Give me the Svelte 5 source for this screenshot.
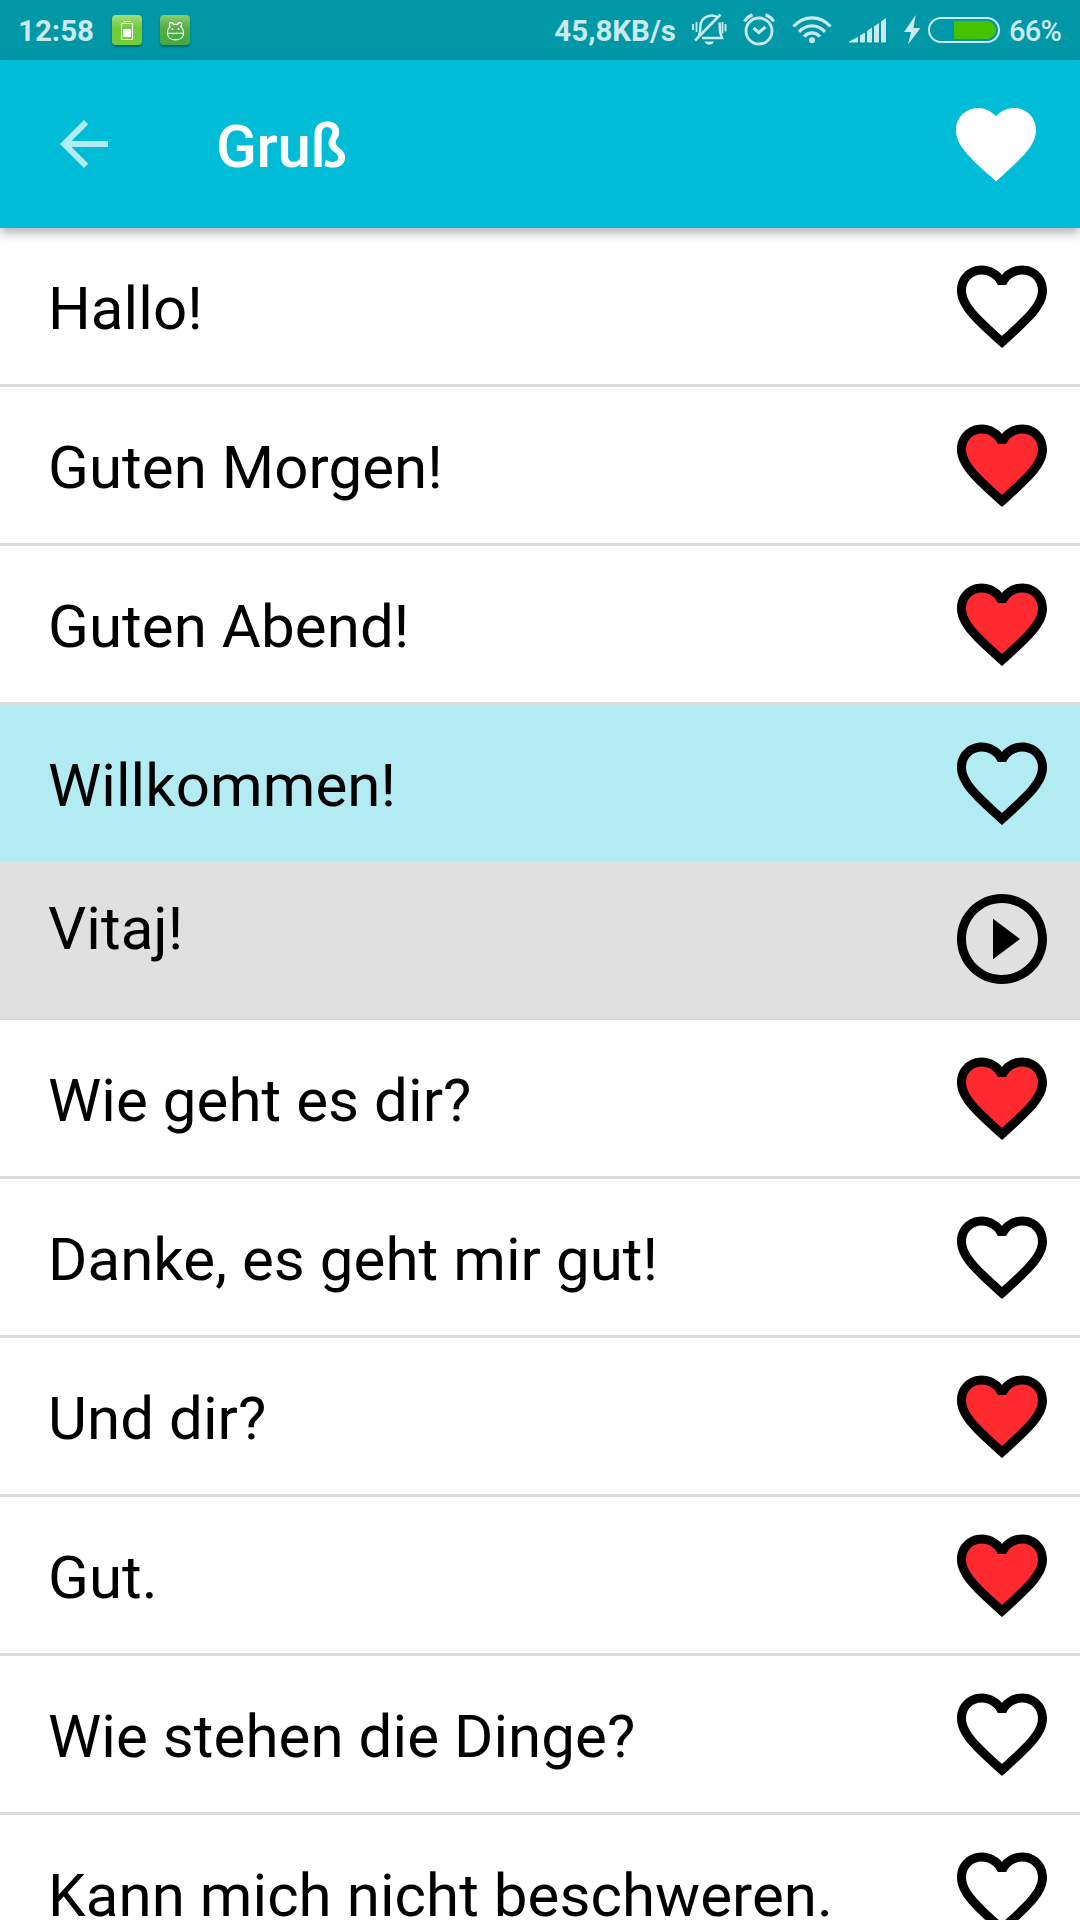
<script>
  let phrases = $state([
    { text: 'Hallo!', favorite: false },
    { text: 'Guten Morgen!', favorite: true },
    { text: 'Guten Abend!', favorite: true },
    { text: 'Willkommen!', favorite: false, translation: 'Vitaj!' },
    { text: 'Wie geht es dir?', favorite: true },
    { text: 'Danke, es geht mir gut!', favorite: false },
    { text: 'Und dir?', favorite: true },
    { text: 'Gut.', favorite: true },
    { text: 'Wie stehen die Dinge?', favorite: false },
    { text: 'Kann mich nicht beschweren.', favorite: false }
  ])

  // index of the phrase whose translation is shown
  let opened = $state(3)
</script>

<div class="screen">

  <!-- STATUS BAR -->
  <div class="status">
    <span class="status__time">12:58</span>
    <span class="app-badge">
      <svg width="30" height="30" viewBox="0 0 30 30" fill="none" stroke="#fff">
        <path d="M11.5 6.5h7" />
        <rect x="9.5" y="8.5" width="11" height="16" />
        <rect x="11" y="14" width="8" height="8" fill="#fff" stroke="none" />
      </svg>
    </span>
    <span class="app-badge app-badge--dark">
      <svg width="30" height="30" viewBox="0 0 30 30" fill="none" stroke="#fff" stroke-width="1.2">
        <path d="M7.5 18.4h16c0 4-3.4 6.5-8 6.5s-8-2.5-8-6.5z" />
        <path d="M7.5 18.4c0-3 .8-5.400 2.700-6.600-1.200-1.800-.8-3.700.6-4.100 1.200-.3 2.400.7 2.700 1.900 1.300-.4 2.700-.4 4 0 .3-1.200 1.500-2.200 2.700-1.900 1.400.4 1.800 2.300.6 4.100 1.900 1.200 2.700 3.600 2.700 6.600" />
        <path d="M12.5 13v2M18.500 13v2" stroke-width="1.6" />
      </svg>
    </span>

    <span class="status__speed">45,8KB/s</span>
    <svg class="status__bell" width="36" height="34" viewBox="0 0 36 34" fill="none" stroke="currentColor">
      <path d="M1 11v6M4.500 9v10M30.500 9v11.500M33.500 11v7.500" stroke-width="1.800" />
      <path d="M7 22.500c1-2 1.300-4.500 1.300-8 0-6.500 4-10.500 9.200-11.700 3.300-.6 6.500.2 8.500 2M27.500 9.500c.3 2.500.2 5.500.5 8 .3 2.600 1 4.800 2 7.500H10" stroke-width="2.500" />
      <path d="M3 27.500 28.500 1.500" stroke-width="2.600" />
      <path d="M12.500 28.600h9.500c-1 2.300-2.600 3.100-4.700 3.100s-3.800-.8-4.800-3.100z" fill="currentColor" stroke="none" />
    </svg>
    <svg class="status__alarm" width="34" height="34" viewBox="0 0 34 34" fill="none" stroke="currentColor">
      <circle cx="16" cy="18" r="13" stroke-width="2.800" />
      <path d="M1.500 8.500C3.500 5.300 6 3 9.500 1.700M22.500 1.700C26 3 28.800 5.300 30.800 8.500" stroke-width="3.200" />
      <path d="M10.500 15 15.800 19.500 22.500 14" stroke-width="3" />
    </svg>
    <svg class="status__wifi" width="40" height="28" viewBox="0 0 40 28" fill="none" stroke="currentColor" stroke-width="3.300">
      <path d="M1.500 10.500C12-1 28-1 38.500 10.500" />
      <path d="M7 15.800c7.500-8 18.500-8 26 0" />
      <path d="M12 20.600c4.700-5 11.300-5 16 0" />
      <circle cx="20" cy="24.300" r="3" fill="currentColor" stroke="none" />
    </svg>
    <svg class="status__signal" width="37" height="25" viewBox="0 0 37 25" fill="currentColor">
      <path d="M0 23.500 9 19v4.500q0 1-1 1H0z" />
      <path d="M11 17.500 16 14.500v9q0 1-1 1h-3q-1 0-1-1z" />
      <path d="M18 13 23 9.500v14q0 1-1 1h-3q-1 0-1-1z" />
      <path d="M25 8.500 30 5v18.500q0 1-1 1h-3q-1 0-1-1z" />
      <path d="M32 3.500 37 0v23.500q0 1-1 1h-3q-1 0-1-1z" />
    </svg>
    <svg class="status__bolt" width="17" height="30" viewBox="0 0 17 30" fill="currentColor">
      <path d="M11.700 0 0 17h7L4 29.500 16.500 13H9.500z" />
    </svg>
    <span class="battery"><span class="battery__fill"></span></span>
    <span class="status__percent">66%</span>
  </div>

  <!-- APP BAR -->
  <header class="app-bar">
    <svg width="72" height="72" viewBox="0 0 24 24" fill="#b2ebf2">
      <path d="M20 11H7.830l5.590-5.590L12 4l-8 8 8 8 1.410-1.410L7.830 13H20v-2z" />
    </svg>
    <h1>Gruß</h1>
    <svg width="96" height="96" viewBox="0 0 24 24" fill="#fff">
      <path d="M12 21.350l-1.450-1.320C5.400 15.360 2 12.280 2 8.500 2 5.420 4.420 3 7.500 3c1.740 0 3.410.81 4.500 2.090C13.090 3.810 14.760 3 16.500 3 19.580 3 22 5.420 22 8.500c0 3.780-3.400 6.860-8.550 11.540L12 21.350z" />
    </svg>
  </header>

  <!-- PHRASES -->
  <main>
    {#each phrases as phrase, i}
      <section class="item">
        <div class="row" class:row--open={opened === i}>
          <span>{phrase.text}</span>
          <svg width="108" height="108" viewBox="0 0 24 24">
            {#if phrase.favorite}
              <path fill="#ff2a2f" d="M12 20C7 15.300 3.300 12 3.300 8.500 3.300 6 5 4.300 7.500 4.300c1.800 0 3.600 1 4.500 2.600.9-1.600 2.700-2.600 4.500-2.600 2.500 0 4.200 1.700 4.200 4.200 0 3.500-3.700 6.800-8.700 11.500z" />
            {/if}
            <path d="M16.500 3c-1.740 0-3.410.81-4.500 2.090C10.910 3.810 9.240 3 7.500 3 4.420 3 2 5.420 2 8.500c0 3.780 3.400 6.860 8.550 11.540L12 21.350l1.450-1.320C18.600 15.360 22 12.280 22 8.500 22 5.420 19.580 3 16.500 3zm-4.400 15.550l-.1.1-.1-.1C7.140 14.240 4 11.390 4 8.500 4 6.500 5.500 5 7.500 5c1.540 0 3.040.99 3.570 2.360h1.870C13.460 5.990 14.960 5 16.500 5c2 0 3.500 1.500 3.500 3.500 0 2.890-3.140 5.740-7.900 10.050z" />
          </svg>
        </div>
        {#if opened === i && phrase.translation}
          <div class="row row--translation">
            <span>{phrase.translation}</span>
            <svg width="108" height="108" viewBox="0 0 24 24">
              <path d="M10 16.500l6-4.500-6-4.500v9zM12 2C6.480 2 2 6.480 2 12s4.480 10 10 10 10-4.480 10-10S17.520 2 12 2zm0 18c-4.410 0-8-3.590-8-8s3.590-8 8-8 8 3.590 8 8-3.590 8-8 8z" />
            </svg>
          </div>
        {/if}
      </section>
    {/each}
  </main>
</div>

<style>
  :global(body) {
    background: #fff;
  }

  .screen {
    width: 1080px;
    height: 1920px;
    display: flex;
    flex-direction: column;
    overflow: hidden;
    font-family: Roboto, sans-serif;
    color: #000;
  }

  svg {
    display: block;
    flex: none;
  }

  /* STATUS BAR */
  .status {
    flex: none;
    box-sizing: border-box;
    height: 60px;
    padding: 0 18px;
    display: flex;
    align-items: center;
    background: #0097a7;
    color: #cceaed;
    font-size: 29.5px;
    font-weight: 700;
    line-height: 60px;
    white-space: nowrap;
  }

  .status__time,
  .status__speed,
  .status__percent {
    padding-top: 1px;
  }

  .status__time {
    width: 76px;
  }

  .app-badge {
    width: 30px;
    height: 30px;
    margin-left: 18px;
    border-radius: 4px;
    background: linear-gradient(#a5dc7c, #6ecb3c 45%, #73cd3d);
    box-shadow: 0 2px 2px rgba(0, 50, 70, 0.45);
  }

  .app-badge--dark {
    background: linear-gradient(#8ccb70, #4fb040 45%, #43a93f);
  }

  .status__speed {
    margin-left: auto;
  }

  .status__bell {
    margin-left: 16px;
  }

  .status__alarm {
    margin-left: 15px;
  }

  .status__wifi {
    margin-left: 15px;
  }

  .status__signal {
    margin-left: 17px;
  }

  .status__bolt {
    margin-left: 18px;
  }

  .battery {
    box-sizing: border-box;
    width: 72px;
    height: 26px;
    margin-left: 7px;
    padding: 2px;
    display: flex;
    justify-content: flex-end;
    border: 2px solid currentColor;
    border-radius: 13px;
  }

  .battery__fill {
    width: 42px;
    background: #47c200;
    border-radius: 0 9px 9px 0;
  }

  .status__percent {
    width: 53px;
    margin-left: 9px;
    font-size: 29px;
    font-weight: 500;
    letter-spacing: -0.7px;
  }

  /* APP BAR */
  .app-bar {
    position: relative;
    z-index: 1;
    flex: none;
    box-sizing: border-box;
    height: 168px;
    padding: 0 36px 0 48px;
    display: flex;
    align-items: center;
    background: #00bcd7;
    box-shadow: 0 5px 10px rgba(0, 0, 0, 0.3);
  }

  .app-bar h1 {
    flex: 1;
    margin: 0;
    padding: 5px 0 0 96px;
    color: #fff;
    font-size: 60px;
    font-weight: 500;
    line-height: 70px;
    letter-spacing: -0.3px;
  }

  /* LIST */
  .item {
    border-bottom: 3px solid #dcdcdc;
  }

  .row {
    box-sizing: border-box;
    height: 156px;
    padding: 0 24px 0 48px;
    display: flex;
    align-items: center;
    justify-content: space-between;
    font-size: 60px;
    line-height: 70px;
    letter-spacing: 0.07px;
    white-space: nowrap;
  }

  .row span {
    padding-top: 5px;
  }

  .row--open {
    background: #b2ebf2;
  }

  .row--translation {
    background: #e0e0e0;
  }

  .row--translation span {
    padding: 0 0 21px;
  }
</style>
